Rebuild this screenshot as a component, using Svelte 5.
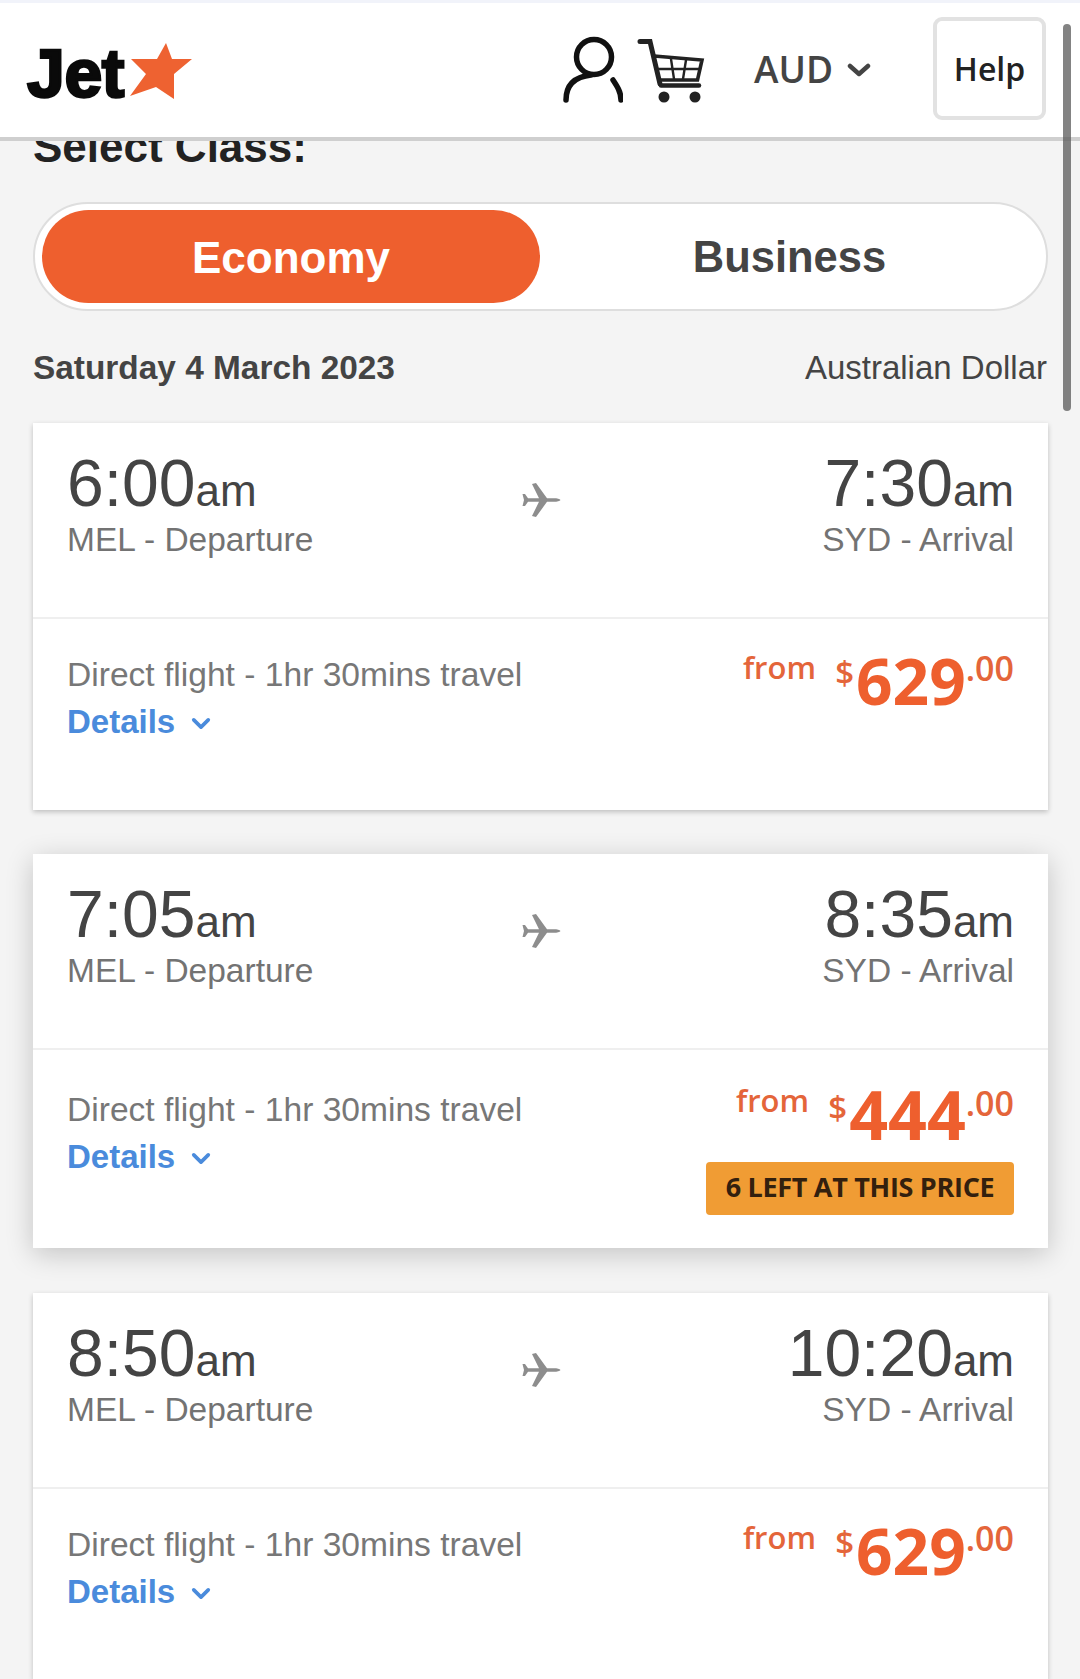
<script lang="ts">
  const flights = [
    { dep: '6:00', arr: '7:30', price: '629', left: 0 },
    { dep: '7:05', arr: '8:35', price: '444', left: 6 },
    { dep: '8:50', arr: '10:20', price: '629', left: 0 },
  ];
</script>

<div class="page">
  <header class="top">
    <div class="logo">
      <span class="jet">Jet</span>
      <svg class="star" viewBox="0 0 64 58" width="64" height="58">
        <path d="M37 1 L43 17 L63 17 L45 32 L45 57 L27 45 L1 54 L17 32 L2 17 L28 17 Z" fill="#ee6231" />
      </svg>
    </div>
    <div class="tools">
      <svg class="user" viewBox="0 0 60 68" width="60" height="68" fill="none" stroke="#111" stroke-width="5.5" stroke-linecap="round">
        <circle cx="31" cy="21" r="17.5" />
        <path d="M3 64 C3 50 10 41 28 39" />
        <path d="M50 44 C54 50 58 56 58 64" />
      </svg>
      <svg class="cart" viewBox="10 5 70 68" width="70" height="68" fill="none" stroke="#222" stroke-linecap="round">
        <path d="M14 9.5 H24 L34 52" stroke-width="5" />
        <path d="M35 53.5 H73" stroke-width="4.5" />
        <path d="M28 24 L76 28 L71.5 48 H33" stroke-width="3.6" />
        <path d="M31 37 H74 M45 27 L48 47 M60 28 L57 47" stroke-width="2.4" />
        <circle cx="38" cy="65" r="5.5" fill="#222" stroke="none" />
        <circle cx="69" cy="65" r="5.5" fill="#222" stroke="none" />
      </svg>
      <div class="aud">
        <span>AUD</span>
        <svg viewBox="0 0 24 15" width="24" height="15" fill="none" stroke="#444" stroke-width="4.5" stroke-linecap="round" stroke-linejoin="round">
          <path d="M3 3 L12 11 L21 3" />
        </svg>
      </div>
      <div class="help">Help</div>
    </div>
  </header>
  <div class="scrollbar"></div>

  <main>
    <h2>Select Class:</h2>

    <div class="toggle">
      <div class="tab on">Economy</div>
      <div class="tab">Business</div>
    </div>

    <div class="dateline">
      <strong>Saturday 4 March 2023</strong>
      <span>Australian Dollar</span>
    </div>

    {#each flights as f}
      <section class="card" class:badged={f.left > 0}>
        <div class="times">
          <div class="pt">
            <div class="clock">{f.dep}<small>am</small></div>
            <div class="place">MEL - Departure</div>
          </div>
          <svg class="plane" viewBox="0 0 40 36" width="40" height="36" fill="#8d8d8d">
            <path d="M39.5 18 C39 16.8 36 16.2 33 16.2 L26 16.2 L15 1 L11 2 L18 16.2 L7 16.2 L4 12 L1.5 12 L3 18 L1.5 24 L4 24 L7 19.8 L18 19.8 L11 34 L15 35 L26 19.8 L33 19.8 C36 19.8 39 19.2 39.5 18 Z" />
          </svg>
          <div class="pt end">
            <div class="clock">{f.arr}<small>am</small></div>
            <div class="place">SYD - Arrival</div>
          </div>
        </div>
        <div class="info">
          <div class="meta">
            <div class="travel">Direct flight - 1hr 30mins travel</div>
            <div class="details">
              Details
              <svg viewBox="0 0 22 14" width="20" height="13" fill="none" stroke="#4a8bdc" stroke-width="4" stroke-linecap="round" stroke-linejoin="round">
                <path d="M3 3 L11 11 L19 3" />
              </svg>
            </div>
          </div>
          <div class="fare">
            <div class="price">
              <span class="from">from</span>
              <span class="cur">$</span><span class="amt">{f.price}</span><span class="cents">.00</span>
            </div>
            {#if f.left > 0}
              <div class="badge">{f.left} LEFT AT THIS PRICE</div>
            {/if}
          </div>
        </div>
      </section>
    {/each}
  </main>
</div>

<style>
  :global(body) { background: #f4f4f4; overflow: hidden; }
  .page {
    position: relative;
    height: 1679px;
    overflow: hidden;
    font-family: "Liberation Sans", Arial, sans-serif;
    color: #444;
  }

  .top {
    position: absolute;
    top: 0; left: 0; right: 0;
    z-index: 2;
    box-sizing: border-box;
    border-top: 3px solid #f1f3fa;
    border-bottom: 4px solid #cfcfcf;
    height: 141px;
    background: #fff;
    display: flex;
    align-items: center;
    justify-content: space-between;
    padding: 0 34px 0 27px;
  }
  .logo { display: flex; align-items: center; margin-top: 6px; }
  .jet {
    font: 700 68px/1 "Liberation Sans", Arial, sans-serif;
    letter-spacing: -0.4px;
    color: #0a0a0a;
    -webkit-text-stroke: 2.6px #0a0a0a;
  }
  .star { margin: -4px 0 0 5px; }
  .tools { display: flex; align-items: center; }
  .user { margin-right: 13px; }
  .cart { margin-right: 48px; margin-top: 2px; }
  .aud {
    display: flex;
    align-items: center;
    gap: 14px;
    margin: -4px 62px 0 0;
    font: 600 37px/1 "Open Sans", sans-serif;
    color: #444;
  }
  .aud svg { margin-top: 4px; }
  .help {
    box-sizing: border-box;
    width: 113px;
    height: 103px;
    margin-top: -3px;
    border: 4px solid #e2e2e2;
    border-radius: 9px;
    display: flex;
    align-items: center;
    justify-content: center;
    font: 600 32px/1 "Open Sans", sans-serif;
    color: #222;
  }
  .scrollbar {
    position: absolute;
    z-index: 3;
    top: 24px;
    left: 1063px;
    width: 8px;
    height: 387px;
    border-radius: 4px;
    background: rgba(90, 90, 90, 0.75);
  }

  main { padding: 125px 32px 0 33px; }
  h2 {
    margin: 0 0 20px;
    font: 700 44px/1 "Liberation Sans", Arial, sans-serif;
    color: #222;
    height: 57px;
  }

  .toggle {
    box-sizing: border-box;
    height: 109px;
    border: 2px solid #dedede;
    border-radius: 55px;
    background: #fff;
    padding: 6px 0 6px 7px;
    display: flex;
  }
  .tab {
    width: 498px;
    display: flex;
    align-items: center;
    justify-content: center;
    border-radius: 47px;
    padding-top: 2px;
    box-sizing: border-box;
    font-weight: 700;
    font-size: 44px;
    color: #444;
    flex: none;
  }
  .tab + .tab { flex: 1; width: auto; font-size: 43.5px; padding-right: 7px; }
  .tab.on { background: #ee5f2e; color: #fff; }

  .dateline {
    display: flex;
    justify-content: space-between;
    align-items: baseline;
    margin: 38px 1px 36px 0;
    font-size: 33.4px;
    line-height: 38px;
    color: #444;
  }
  .dateline span { font-size: 33px; }

  .card {
    background: #fff;
    height: 387px;
    margin-bottom: 44px;
    box-shadow: 0 2px 5px rgba(0, 0, 0, 0.22);
  }
  .card.badged {
    height: 394px;
    margin-bottom: 45px;
    box-shadow: 0 6px 26px rgba(0, 0, 0, 0.2);
  }
  .times {
    box-sizing: border-box;
    height: 196px;
    padding: 24px 34px 0;
    display: flex;
    justify-content: space-between;
    align-items: flex-start;
    border-bottom: 2px solid #efefef;
  }
  .pt { flex: 1; }
  .pt.end { text-align: right; }
  .clock {
    font-size: 66px;
    line-height: 72px;
    color: #444;
  }
  .clock small { font-size: 44px; }
  .place {
    font-size: 33.5px;
    line-height: 38px;
    color: #737373;
    margin-top: -6px;
  }
  .plane { flex: none; margin-top: 35px; }

  .info {
    display: flex;
    justify-content: space-between;
    padding: 35px 34px 0;
  }
  .badged .info { padding-top: 39px; }
  .travel {
    font-size: 33.6px;
    line-height: 42px;
    color: #777;
  }
  .details {
    display: flex;
    align-items: center;
    gap: 16px;
    font-size: 33px;
    font-weight: 700;
    line-height: 42px;
    margin-top: 5px;
    color: #4a8bdc;
  }
  .details svg { margin-top: 3px; }
  .fare {
    display: flex;
    flex-direction: column;
    align-items: flex-end;
    margin-top: -9px;
    font-family: "Open Sans", sans-serif;
    color: #ee5f2e;
  }
  .badged .fare { margin-top: -11px; }
  .price { white-space: nowrap; line-height: 72px; height: 72px; }
  .from { font-size: 31px; font-weight: 600; margin-right: 15px; position: relative; top: -26px; color: #e4653a; }
  .badged .from { top: -28px; }
  .cur { font-size: 33px; font-weight: 600; position: relative; top: -20px; color: #e4653a; margin-right: 2px; }
  .amt { font-size: 64px; font-weight: 700; }
  .badged .amt { font-size: 68px; }
  .cents { font-size: 34px; font-weight: 600; position: relative; top: -24px; color: #e4653a; }
  .badge {
    box-sizing: border-box;
    margin-top: 12px;
    width: 308px;
    height: 53px;
    border-radius: 4px;
    background: #f09c34;
    color: #33200e;
    font-size: 27px;
    font-weight: 700;
    letter-spacing: -0.3px;
    line-height: 50px;
    text-align: center;
  }
</style>
